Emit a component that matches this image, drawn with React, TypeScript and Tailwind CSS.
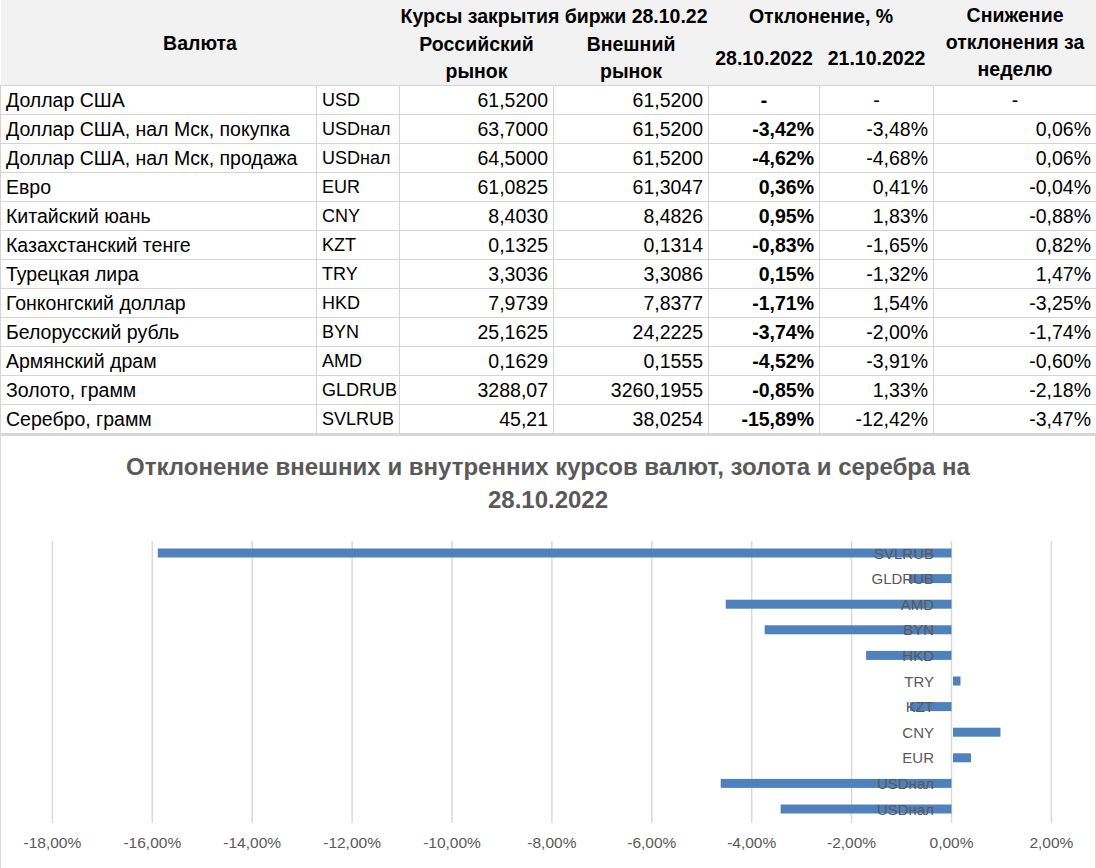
const rows = [
  { name: "Доллар США", code: "USD", ru: "61,5200", ext: "61,5200", d28: "-", d21: "-", diff: "-" },
  { name: "Доллар США, нал Мск, покупка", code: "USDнал", ru: "63,7000", ext: "61,5200", d28: "-3,42%", d21: "-3,48%", diff: "0,06%" },
  { name: "Доллар США, нал Мск, продажа", code: "USDнал", ru: "64,5000", ext: "61,5200", d28: "-4,62%", d21: "-4,68%", diff: "0,06%" },
  { name: "Евро", code: "EUR", ru: "61,0825", ext: "61,3047", d28: "0,36%", d21: "0,41%", diff: "-0,04%" },
  { name: "Китайский юань", code: "CNY", ru: "8,4030", ext: "8,4826", d28: "0,95%", d21: "1,83%", diff: "-0,88%" },
  { name: "Казахстанский тенге", code: "KZT", ru: "0,1325", ext: "0,1314", d28: "-0,83%", d21: "-1,65%", diff: "0,82%" },
  { name: "Турецкая лира", code: "TRY", ru: "3,3036", ext: "3,3086", d28: "0,15%", d21: "-1,32%", diff: "1,47%" },
  { name: "Гонконгский доллар", code: "HKD", ru: "7,9739", ext: "7,8377", d28: "-1,71%", d21: "1,54%", diff: "-3,25%" },
  { name: "Белорусский рубль", code: "BYN", ru: "25,1625", ext: "24,2225", d28: "-3,74%", d21: "-2,00%", diff: "-1,74%" },
  { name: "Армянский драм", code: "AMD", ru: "0,1629", ext: "0,1555", d28: "-4,52%", d21: "-3,91%", diff: "-0,60%" },
  { name: "Золото, грамм", code: "GLDRUB", ru: "3288,07", ext: "3260,1955", d28: "-0,85%", d21: "1,33%", diff: "-2,18%" },
  { name: "Серебро, грамм", code: "SVLRUB", ru: "45,21", ext: "38,0254", d28: "-15,89%", d21: "-12,42%", diff: "-3,47%" },
];

// chart order: top to bottom
const bars = [
  { label: "SVLRUB", v: -15.89 },
  { label: "GLDRUB", v: -0.85 },
  { label: "AMD", v: -4.52 },
  { label: "BYN", v: -3.74 },
  { label: "HKD", v: -1.71 },
  { label: "TRY", v: 0.15 },
  { label: "KZT", v: -0.83 },
  { label: "CNY", v: 0.95 },
  { label: "EUR", v: 0.36 },
  { label: "USDнал", v: -4.62 },
  { label: "USDнал", v: -3.42 },
];

const ticks = [-18, -16, -14, -12, -10, -8, -6, -4, -2, 0, 2];

const x = (v: number) => 950.5 + 49.95 * v;

function Chart() {
  return (
    <svg width="1094" height="336" viewBox="0 0 1094 336" className="block">
      {ticks.map((t) => (
        <line key={t} x1={x(t)} x2={x(t)} y1={10} y2={292} stroke="#d9d9d9" strokeWidth="1.5" />
      ))}
      {bars.map((b, i) => {
        const cy = 22 + i * 25.6;
        const left = b.v < 0 ? x(b.v) : x(0) + 1.5;
        const w = Math.abs(x(b.v) - x(0));
        return <rect key={i} x={left} y={cy - 4.5} width={w} height={9} fill="#4f81bd" />;
      })}
      {bars.map((b, i) => (
        <text
          key={i}
          x={933}
          y={22 + i * 25.6 + 5.5}
          textAnchor="end"
          fill="#595959"
          fontSize="15"
          fontFamily="'Liberation Sans', Arial, sans-serif"
        >
          {b.label}
        </text>
      ))}
      {ticks.map((t) => (
        <text
          key={t}
          x={x(t)}
          y={317}
          textAnchor="middle"
          fill="#595959"
          fontSize="15.5"
          fontFamily="'Liberation Sans', Arial, sans-serif"
        >
          {t.toFixed(2).replace(".", ",")}%
        </text>
      ))}
    </svg>
  );
}

export default function App() {
  const td = "border border-[#d4d4d4] px-[5px] h-[29px] leading-none whitespace-nowrap overflow-hidden";
  return (
    <div className="w-[1096px] h-[868px] bg-white text-black font-['Liberation_Sans',Arial,sans-serif] overflow-hidden">
      <table className="table-fixed border-collapse w-[1096px] text-[19.5px]">
        <colgroup>
          <col className="w-[316px]" />
          <col className="w-[83px]" />
          <col className="w-[154px]" />
          <col className="w-[155px]" />
          <col className="w-[111px]" />
          <col className="w-[114px]" />
          <col className="w-[163px]" />
        </colgroup>
        <thead className="bg-[#f2f2f2] font-bold">
          <tr className="h-[28px]">
            <th colSpan={2} rowSpan={3} className="font-bold pt-[2px]">Валюта</th>
            <th colSpan={2} className="font-bold whitespace-nowrap pt-[2px]">Курсы закрытия биржи 28.10.22</th>
            <th colSpan={2} className="font-bold pt-[2px]">Отклонение, %</th>
            <th rowSpan={3} className="font-bold leading-[27px] px-1">
              Снижение
              <br />
              отклонения за
              <br />
              неделю
            </th>
          </tr>
          <tr className="h-[27px]">
            <th rowSpan={2} className="font-bold leading-[27px]">
              Российский
              <br />
              рынок
            </th>
            <th rowSpan={2} className="font-bold leading-[27px]">
              Внешний
              <br />
              рынок
            </th>
            <th rowSpan={2} className="font-bold whitespace-nowrap">28.10.2022</th>
            <th rowSpan={2} className="font-bold whitespace-nowrap">21.10.2022</th>
          </tr>
          <tr className="h-[27px]" />
        </thead>
        <tbody>
          {rows.map((r, i) => (
            <tr key={i}>
              <td className={`${td} text-left`}>{r.name}</td>
              <td className={`${td} text-left text-[18px]`}>{r.code}</td>
              <td className={`${td} text-right`}>{r.ru}</td>
              <td className={`${td} text-right`}>{r.ext}</td>
              <td className={`${td} font-bold ${r.d28 === "-" ? "text-center" : "text-right"}`}>{r.d28}</td>
              <td className={`${td} ${r.d21 === "-" ? "text-center" : "text-right"}`}>{r.d21}</td>
              <td className={`${td} ${r.diff === "-" ? "text-center" : "text-right"}`}>{r.diff}</td>
            </tr>
          ))}
        </tbody>
      </table>
      <div className="border-x border-b border-t-2 border-[#d9d9d9] h-[436px] flex flex-col">
        <div className="pt-[14px] text-center text-[24px] font-bold text-[#595959] leading-[33px]">
          Отклонение внешних и внутренних курсов валют, золота и серебра на
          <br />
          28.10.2022
        </div>
        <div className="mt-[15px]">
          <Chart />
        </div>
      </div>
    </div>
  );
}
